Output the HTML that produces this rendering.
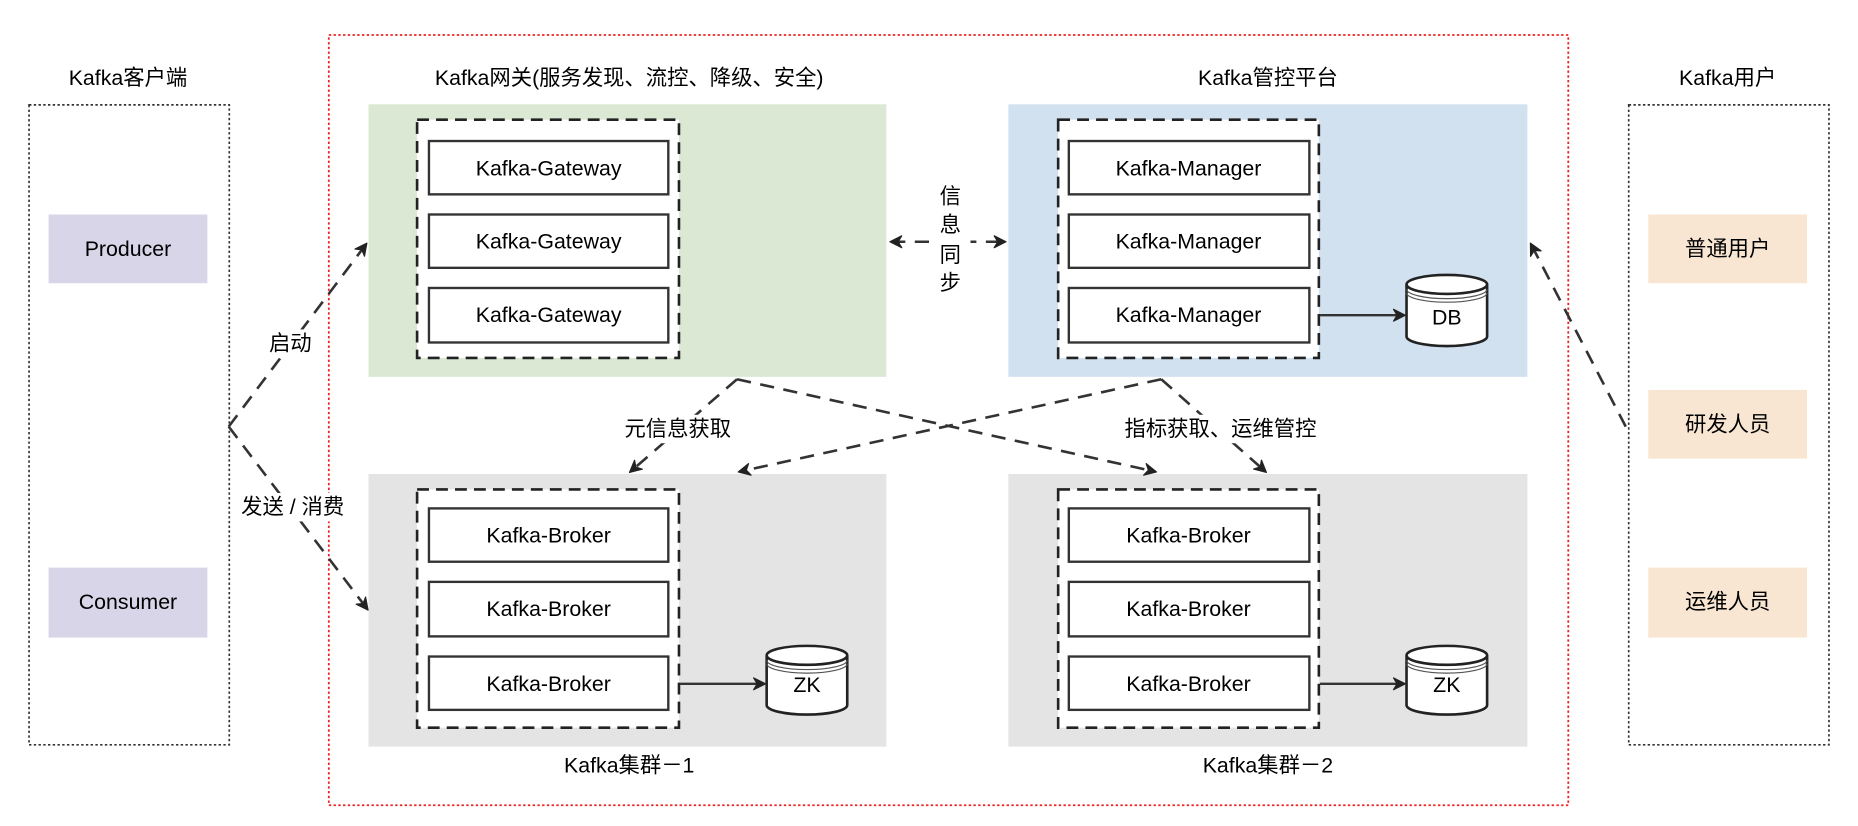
<!DOCTYPE html>
<html><head><meta charset="utf-8"><style>
html,body{margin:0;padding:0;background:#fff;width:1858px;height:826px;overflow:hidden}
svg{display:block}
text{font-family:"Liberation Sans","Noto Sans CJK SC",sans-serif;font-size:18px;fill:#000;text-anchor:middle;dominant-baseline:central}
</style></head><body>
<svg width="1858" height="826" viewBox="0 0 1568 697" preserveAspectRatio="none" xmlns="http://www.w3.org/2000/svg">
<defs>
<marker id="ah" viewBox="0 0 12 12" refX="10" refY="6" markerWidth="12" markerHeight="12" orient="auto" markerUnits="userSpaceOnUse"><path d="M1,1 L11,6 L1,11 L4,6 Z" fill="#222" stroke="#222" stroke-width="1" stroke-linejoin="round"/></marker>
<marker id="as" viewBox="0 0 12 12" refX="2" refY="6" markerWidth="12" markerHeight="12" orient="auto" markerUnits="userSpaceOnUse"><path d="M11,1 L1,6 L11,11 L8,6 Z" fill="#222" stroke="#222" stroke-width="1" stroke-linejoin="round"/></marker>
</defs>
<rect x="277.5" y="29.5" width="1046" height="650" fill="none" stroke="#e22" stroke-width="1.5" stroke-dasharray="2,2"/>
<text x="108" y="66">Kafka客户端</text>
<rect x="24.5" y="88.5" width="169" height="540" fill="none" stroke="#333" stroke-width="1.4" stroke-dasharray="2,2"/>
<rect x="41" y="181" width="134" height="58" fill="#d9d5e9"/><text x="108" y="210">Producer</text>
<rect x="41" y="479" width="134" height="59" fill="#d9d5e9"/><text x="108" y="508">Consumer</text>
<text x="1458" y="66">Kafka用户</text>
<rect x="1374.5" y="88.5" width="169" height="540" fill="none" stroke="#333" stroke-width="1.4" stroke-dasharray="2,2"/>
<rect x="1391" y="181" width="134" height="58" fill="#f8e6d2"/><text x="1458" y="210">普通用户</text>
<rect x="1391" y="329" width="134" height="58" fill="#f8e6d2"/><text x="1458" y="358">研发人员</text>
<rect x="1391" y="479" width="134" height="59" fill="#f8e6d2"/><text x="1458" y="508">运维人员</text>
<text x="531" y="66">Kafka网关(服务发现、流控、降级、安全)</text>
<text x="1070" y="66">Kafka管控平台</text>
<text x="531" y="646">Kafka集群－1</text>
<text x="1070" y="646">Kafka集群－2</text>
<rect x="311" y="88" width="437" height="230" fill="#dbe8d4"/>
<rect x="851" y="88" width="438" height="230" fill="#d2e1f0"/>
<rect x="311" y="400" width="437" height="230" fill="#e4e4e4"/>
<rect x="851" y="400" width="438" height="230" fill="#e4e4e4"/>
<g stroke="#222" stroke-width="2.2" stroke-dasharray="10,6">
<rect x="352" y="101" width="221" height="201" fill="#fff"/>
<rect x="893" y="101" width="220" height="201" fill="#fff"/>
<rect x="352" y="413" width="221" height="201" fill="#fff"/>
<rect x="893" y="413" width="220" height="201" fill="#fff"/>
</g>
<g fill="#fff" stroke="#333" stroke-width="2">
<rect x="362" y="119" width="202" height="45"/><rect x="362" y="181" width="202" height="45"/><rect x="362" y="243" width="202" height="46"/>
<rect x="902" y="119" width="203" height="45"/><rect x="902" y="181" width="203" height="45"/><rect x="902" y="243" width="203" height="46"/>
<rect x="362" y="429" width="202" height="45"/><rect x="362" y="491" width="202" height="46"/><rect x="362" y="554" width="202" height="45"/>
<rect x="902" y="429" width="203" height="45"/><rect x="902" y="491" width="203" height="46"/><rect x="902" y="554" width="203" height="45"/>
</g>
<text x="463" y="142">Kafka-Gateway</text><text x="463" y="204">Kafka-Gateway</text><text x="463" y="266">Kafka-Gateway</text>
<text x="1003" y="142">Kafka-Manager</text><text x="1003" y="204">Kafka-Manager</text><text x="1003" y="266">Kafka-Manager</text>
<text x="463" y="452">Kafka-Broker</text><text x="463" y="514">Kafka-Broker</text><text x="463" y="577">Kafka-Broker</text>
<text x="1003" y="452">Kafka-Broker</text><text x="1003" y="514">Kafka-Broker</text><text x="1003" y="577">Kafka-Broker</text>
<g fill="#fff" stroke="#222" stroke-width="2.2">
<path d="M1187,240 v44 a34,8 0 0 0 68,0 v-44 a34,8 0 0 0 -68,0 a34,8 0 0 0 68,0"/>
<path d="M647,553 v42 a34,8 0 0 0 68,0 v-42 a34,8 0 0 0 -68,0 a34,8 0 0 0 68,0"/>
<path d="M1187,553 v42 a34,8 0 0 0 68,0 v-42 a34,8 0 0 0 -68,0 a34,8 0 0 0 68,0"/>
</g>
<g fill="none" stroke="#555" stroke-width="1">
<path d="M1187,244 a34,8 0 0 0 68,0 M1187,247 a34,8 0 0 0 68,0"/>
<path d="M647,557 a34,8 0 0 0 68,0 M647,560 a34,8 0 0 0 68,0"/>
<path d="M1187,557 a34,8 0 0 0 68,0 M1187,560 a34,8 0 0 0 68,0"/>
</g>
<text x="1221" y="268">DB</text><text x="681" y="578">ZK</text><text x="1221" y="578">ZK</text>
<g stroke="#333" stroke-width="2" fill="none">
<line x1="1114" y1="266" x2="1185" y2="266" marker-end="url(#ah)"/>
<line x1="574" y1="577" x2="645" y2="577" marker-end="url(#ah)"/>
<line x1="1114" y1="577" x2="1185" y2="577" marker-end="url(#ah)"/>
</g>
<g stroke="#333" stroke-width="2.2" fill="none" stroke-dasharray="12,8">
<line x1="193" y1="360" x2="309" y2="206" marker-end="url(#ah)"/>
<line x1="193" y1="360" x2="310" y2="514" marker-end="url(#ah)"/>
<line x1="752" y1="204" x2="848" y2="204" marker-end="url(#ah)" marker-start="url(#as)"/>
<line x1="622" y1="320" x2="975" y2="398" marker-end="url(#ah)"/>
<line x1="622" y1="320" x2="532" y2="398" marker-end="url(#ah)"/>
<line x1="980" y1="320" x2="1068" y2="398" marker-end="url(#ah)"/>
<line x1="980" y1="320" x2="624" y2="398" marker-end="url(#ah)"/>
<line x1="1372" y1="360" x2="1292" y2="206" marker-end="url(#ah)"/>
</g>
<rect x="785" y="152" width="34" height="104" fill="#fff"/>
<text x="802" y="166">信</text><text x="802" y="190">息</text><text x="802" y="215">同</text><text x="802" y="239">步</text>
<rect x="218" y="278" width="54" height="24" fill="#fff"/><text x="245" y="290">启动</text>
<rect x="196" y="416" width="102" height="24" fill="#fff"/><text x="247" y="428">发送 / 消费</text>
<rect x="520" y="350" width="104" height="24" fill="#fff"/><text x="572" y="362">元信息获取</text>
<rect x="938" y="350" width="184" height="24" fill="#fff"/><text x="1030" y="362">指标获取、运维管控</text>
</svg>
</body></html>
